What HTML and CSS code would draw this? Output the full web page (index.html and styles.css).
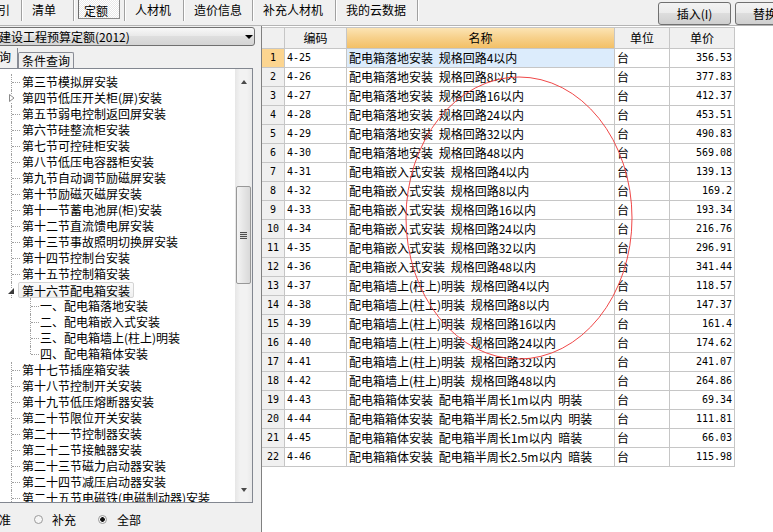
FILE: index.html
```html
<!DOCTYPE html>
<html lang="zh-CN">
<head>
<meta charset="utf-8">
<title>定额</title>
<link rel="stylesheet" href="styles.css">
</head>
<body>
<div class="app">
  <div class="topbar">
    <div class="tabs">
      <div class="tab tab-first">引</div>
      <div class="tab w-qd">清单</div>
      <div class="tab tab-sel"><span class="sel-box">定额</span></div>
      <div class="tab w-rcj">人材机</div>
      <div class="tab w-zj">造价信息</div>
      <div class="tab w-bc">补充人材机</div>
      <div class="tab w-yun">我的云数据</div>
    </div>
    <div class="actions">
      <button class="btn btn-insert">插入(I)</button>
      <button class="btn btn-replace">替换</button>
    </div>
  </div>

  <div class="main">
    <div class="left">
      <div class="combo"><span class="combo-text">建设工程预算定额(2012)</span><span class="combo-arrow"></span></div>
      <div class="ltabs">
        <div class="ltab-sel">询</div>
        <div class="ltab">条件查询</div>
      </div>
      <div class="treebox">
        <div class="tree">
          <div class="node">第三节模拟屏安装</div>
          <div class="node has-exp"><svg class="exp" width="6" height="8" viewBox="0 0 6 8"><path d="M0.5 0.5 L5 4 L0.5 7.5 Z" fill="#fff" stroke="#8a8a8a"/></svg>第四节低压开关柜(屏)安装</div>
          <div class="node">第五节弱电控制返回屏安装</div>
          <div class="node">第六节硅整流柜安装</div>
          <div class="node">第七节可控硅柜安装</div>
          <div class="node">第八节低压电容器柜安装</div>
          <div class="node">第九节自动调节励磁屏安装</div>
          <div class="node">第十节励磁灭磁屏安装</div>
          <div class="node">第十一节蓄电池屏(柜)安装</div>
          <div class="node">第十二节直流馈电屏安装</div>
          <div class="node">第十三节事故照明切换屏安装</div>
          <div class="node">第十四节控制台安装</div>
          <div class="node">第十五节控制箱安装</div>
          <div class="node has-exp"><svg class="exp exp-open" width="6" height="6" viewBox="0 0 6 6"><path d="M6 0 L6 6 L0 6 Z" fill="#3a3a3a"/></svg><span class="sel">第十六节配电箱安装</span></div>
          <div class="node child">一、配电箱落地安装</div>
          <div class="node child">二、配电箱嵌入式安装</div>
          <div class="node child">三、配电箱墙上(柱上)明装</div>
          <div class="node child last">四、配电箱箱体安装</div>
          <div class="node">第十七节插座箱安装</div>
          <div class="node">第十八节控制开关安装</div>
          <div class="node">第十九节低压熔断器安装</div>
          <div class="node">第二十节限位开关安装</div>
          <div class="node">第二十一节控制器安装</div>
          <div class="node">第二十二节接触器安装</div>
          <div class="node">第二十三节磁力启动器安装</div>
          <div class="node">第二十四节减压启动器安装</div>
          <div class="node">第二十五节电磁铁(电磁制动器)安装</div>
        </div>
        <div class="vscroll">
          <div class="sb-btn"><span class="arr-up"></span></div>
          <div class="sb-track">
            <div class="thumb"><span class="grip"></span></div>
          </div>
          <div class="sb-btn"><span class="arr-down"></span></div>
        </div>
      </div>
      <div class="radios">
        <span class="rtext first">准</span>
        <span class="radio r1"></span>
        <span class="rtext">补充</span>
        <span class="radio on r2"></span>
        <span class="rtext">全部</span>
      </div>
    </div>

    <div class="splitter"></div>

    <div class="right">
      <div class="grid">
        <div class="row head">
          <div class="cell"></div>
          <div class="cell">编码</div>
          <div class="cell hot">名称</div>
          <div class="cell">单位</div>
          <div class="cell">单价</div>
        </div>
        <div class="row cur"><div class="cell num">1</div><div class="cell code">4-25</div><div class="cell name">配电箱落地安装 规格回路4以内</div><div class="cell unit">台</div><div class="cell price">356.53</div></div>
        <div class="row"><div class="cell num">2</div><div class="cell code">4-26</div><div class="cell name">配电箱落地安装 规格回路8以内</div><div class="cell unit">台</div><div class="cell price">377.83</div></div>
        <div class="row"><div class="cell num">3</div><div class="cell code">4-27</div><div class="cell name">配电箱落地安装 规格回路16以内</div><div class="cell unit">台</div><div class="cell price">412.37</div></div>
        <div class="row"><div class="cell num">4</div><div class="cell code">4-28</div><div class="cell name">配电箱落地安装 规格回路24以内</div><div class="cell unit">台</div><div class="cell price">453.51</div></div>
        <div class="row"><div class="cell num">5</div><div class="cell code">4-29</div><div class="cell name">配电箱落地安装 规格回路32以内</div><div class="cell unit">台</div><div class="cell price">490.83</div></div>
        <div class="row"><div class="cell num">6</div><div class="cell code">4-30</div><div class="cell name">配电箱落地安装 规格回路48以内</div><div class="cell unit">台</div><div class="cell price">569.08</div></div>
        <div class="row"><div class="cell num">7</div><div class="cell code">4-31</div><div class="cell name">配电箱嵌入式安装 规格回路4以内</div><div class="cell unit">台</div><div class="cell price">139.13</div></div>
        <div class="row"><div class="cell num">8</div><div class="cell code">4-32</div><div class="cell name">配电箱嵌入式安装 规格回路8以内</div><div class="cell unit">台</div><div class="cell price">169.2</div></div>
        <div class="row"><div class="cell num">9</div><div class="cell code">4-33</div><div class="cell name">配电箱嵌入式安装 规格回路16以内</div><div class="cell unit">台</div><div class="cell price">193.34</div></div>
        <div class="row"><div class="cell num">10</div><div class="cell code">4-34</div><div class="cell name">配电箱嵌入式安装 规格回路24以内</div><div class="cell unit">台</div><div class="cell price">216.76</div></div>
        <div class="row"><div class="cell num">11</div><div class="cell code">4-35</div><div class="cell name">配电箱嵌入式安装 规格回路32以内</div><div class="cell unit">台</div><div class="cell price">296.91</div></div>
        <div class="row"><div class="cell num">12</div><div class="cell code">4-36</div><div class="cell name">配电箱嵌入式安装 规格回路48以内</div><div class="cell unit">台</div><div class="cell price">341.44</div></div>
        <div class="row"><div class="cell num">13</div><div class="cell code">4-37</div><div class="cell name">配电箱墙上(柱上)明装 规格回路4以内</div><div class="cell unit">台</div><div class="cell price">118.57</div></div>
        <div class="row"><div class="cell num">14</div><div class="cell code">4-38</div><div class="cell name">配电箱墙上(柱上)明装 规格回路8以内</div><div class="cell unit">台</div><div class="cell price">147.37</div></div>
        <div class="row"><div class="cell num">15</div><div class="cell code">4-39</div><div class="cell name">配电箱墙上(柱上)明装 规格回路16以内</div><div class="cell unit">台</div><div class="cell price">161.4</div></div>
        <div class="row"><div class="cell num">16</div><div class="cell code">4-40</div><div class="cell name">配电箱墙上(柱上)明装 规格回路24以内</div><div class="cell unit">台</div><div class="cell price">174.62</div></div>
        <div class="row"><div class="cell num">17</div><div class="cell code">4-41</div><div class="cell name">配电箱墙上(柱上)明装 规格回路32以内</div><div class="cell unit">台</div><div class="cell price">241.07</div></div>
        <div class="row"><div class="cell num">18</div><div class="cell code">4-42</div><div class="cell name">配电箱墙上(柱上)明装 规格回路48以内</div><div class="cell unit">台</div><div class="cell price">264.86</div></div>
        <div class="row"><div class="cell num">19</div><div class="cell code">4-43</div><div class="cell name">配电箱箱体安装 配电箱半周长1m以内 明装</div><div class="cell unit">台</div><div class="cell price">69.34</div></div>
        <div class="row"><div class="cell num">20</div><div class="cell code">4-44</div><div class="cell name">配电箱箱体安装 配电箱半周长2.5m以内 明装</div><div class="cell unit">台</div><div class="cell price">111.81</div></div>
        <div class="row"><div class="cell num">21</div><div class="cell code">4-45</div><div class="cell name">配电箱箱体安装 配电箱半周长1m以内 暗装</div><div class="cell unit">台</div><div class="cell price">66.03</div></div>
        <div class="row"><div class="cell num">22</div><div class="cell code">4-46</div><div class="cell name">配电箱箱体安装 配电箱半周长2.5m以内 暗装</div><div class="cell unit">台</div><div class="cell price">115.98</div></div>
      </div>
      <svg class="mark" width="512" height="506" viewBox="0 0 512 506">
        <ellipse cx="257" cy="192" rx="113" ry="141" fill="none" stroke="#f04848" stroke-width="1"/>
      </svg>
    </div>
  </div>
</div>
</body>
</html>
```

FILE: styles.css
```css
* { box-sizing: border-box; margin: 0; padding: 0; }
html, body { width: 773px; height: 532px; overflow: hidden; }
body {
  background: #f0f0f0;
  font-family: "Noto Sans CJK SC", "Noto Sans", sans-serif;
  font-size: 12px;
  line-height: 14px;
  color: #000;
}
.app { width: 773px; height: 532px; display: flex; flex-direction: column; overflow: hidden; }

/* ---------- top bar ---------- */
.topbar {
  height: 26px;
  flex: none;
  display: flex;
  border-bottom: 1px solid #b4b4b4;
  overflow: hidden;
}
.tabs { display: flex; height: 21px; }
.tab {
  height: 21px;
  line-height: 20px;
  padding-left: 10px;
  border-right: 1px solid #a0a0a0;
  box-shadow: 1px 0 0 #ffffff;
  white-space: nowrap;
}
.tab-first { width: 22px; padding-left: 0; text-indent: -2px; }
.w-qd { width: 52px; }
.w-rcj { width: 59px; }
.w-zj { width: 69px; }
.w-bc { width: 83px; }
.w-yun { width: 82px; }
.tab-sel { width: 51px; padding-left: 4px; }
.sel-box {
  display: block;
  width: 42px;
  height: 20px;
  margin-top: -1px;
  padding-left: 5px;
  line-height: 21px;
  border: 1px solid #8c8c8c;
  border-left-color: #6e6e6e;
  background: repeating-conic-gradient(#ffffff 0 25%, #e9e9e9 0 50%) 0 0 / 2px 2px;
}
.actions {
  margin-left: auto;
  margin-right: -40px;
  display: flex;
  gap: 4px;
  padding-top: 2px;
}
.btn {
  height: 23px;
  border: 1px solid #707070;
  border-radius: 3px;
  background: linear-gradient(#f3f3f3, #ebebeb 50%, #dddddd 50%, #cfcfcf);
  font-family: inherit;
  font-size: 12px;
  color: #000;
  line-height: 20px;
  white-space: nowrap;
}
.btn-insert { width: 73px; }
.btn-replace { width: 78px; text-align: left; padding-left: 17px; }

/* ---------- main ---------- */
.main { flex: 1; display: flex; min-height: 0; }
.left { width: 255px; flex: none; display: flex; flex-direction: column; }
.splitter { width: 6px; flex: none; }
.right {
  flex: 1;
  position: relative;
  background: #ffffff;
  border-left: 1px solid #808080;
  padding-top: 1px;
  overflow: hidden;
}

/* combo */
.combo {
  margin-top: 1px;
  margin-left: -3px;
  width: 258px;
  height: 19px;
  border: 1px solid #707070;
  border-radius: 3px;
  background: linear-gradient(#f8f8f8, #e8e8e8 50%, #dedede 50%, #d4d4d4);
  display: flex;
  align-items: center;
  padding-left: 1px;
  white-space: nowrap;
}
.combo-arrow {
  margin-left: auto;
  margin-right: 1px;
  width: 0;
  height: 0;
  border-left: 4px solid transparent;
  border-right: 4px solid transparent;
  border-top: 4px solid #000;
}

/* left tabs */
.ltabs { display: flex; align-items: flex-end; height: 20px; margin-top: 2px; }
.ltab-sel {
  width: 18px;
  height: 20px;
  line-height: 18px;
  text-indent: -1px;
  border-right: 1px solid #898c95;
  overflow: hidden;
}
.ltab {
  height: 16px;
  line-height: 15px;
  padding: 0 3px;
  border: 1px solid #898c95;
  border-bottom: none;
  border-radius: 2px 2px 0 0;
  white-space: nowrap;
}

/* tree */
.treebox {
  width: 253px;
  height: 435px;
  flex: none;
  display: flex;
  background: #ffffff;
  border: 1px solid #828790;
  border-left: none;
  overflow: hidden;
}
.tree { flex: 1; overflow: hidden; padding-top: 5px; }
.node {
  position: relative;
  height: 16px;
  line-height: 16px;
  padding-left: 22px;
  white-space: nowrap;
}
.node::before {
  content: "";
  position: absolute;
  left: 11px;
  top: 0;
  bottom: 0;
  border-left: 1px dotted #a0a0a0;
}
.node::after {
  content: "";
  position: absolute;
  left: 12px;
  top: 8px;
  width: 8px;
  border-top: 1px dotted #a0a0a0;
}
.node.has-exp::after { display: none; }
.exp { position: absolute; left: 9px; top: 4px; background: #fff; }
.exp-open { left: 8px; top: 6px; }
.node.child { padding-left: 40px; }
.node.child::before { left: 30px; }
.node.child.last::before { bottom: 8px; }
.node.child::after { left: 31px; width: 8px; }
.sel {
  display: inline-block;
  height: 16px;
  line-height: 15px;
  margin-left: -4px;
  padding: 0 3px;
  border: 1px solid #d4d4d4;
  border-radius: 2px;
  background: linear-gradient(#fbfbfb, #efefef);
}

/* scrollbar */
.vscroll {
  width: 17px;
  flex: none;
  display: flex;
  flex-direction: column;
  padding: 4px 0;
  background: linear-gradient(90deg, #e6e6e6, #f2f2f2 30%, #f2f2f2 70%, #e9e9e9);
}
.sb-btn { height: 17px; flex: none; display: flex; align-items: center; justify-content: center; }
.arr-up, .arr-down {
  width: 0;
  height: 0;
  border-left: 3.5px solid transparent;
  border-right: 3.5px solid transparent;
}
.arr-up { border-bottom: 4px solid #4a4a4a; }
.arr-down { border-top: 4px solid #4a4a4a; }
.sb-track { flex: 1; padding: 96px 1px 0 1px; }
.thumb {
  height: 98px;
  border: 1px solid #989898;
  border-radius: 2px;
  background: linear-gradient(90deg, #f4f4f4, #e6e6e6 50%, #d9d9d9);
  display: flex;
  align-items: center;
  justify-content: center;
}
.grip {
  width: 7px;
  height: 7px;
  background: repeating-linear-gradient(#4e4e4e 0 1px, #d8d8d8 1px 2px);
}

/* radios */
.radios {
  flex: 1;
  display: flex;
  align-items: center;
  padding-top: 4px;
  white-space: nowrap;
}
.rtext.first { margin-left: -1px; }
.radio {
  width: 9px;
  height: 9px;
  border-radius: 50%;
  border: 1px solid #9a9a9a;
  background: #f6f6f6;
  flex: none;
}
.radio.on { background: radial-gradient(circle, #111 0 2px, #f6f6f6 2.6px); }
.r1 { margin: 0 9px 0 23px; }
.r2 { margin: 0 10px 0 22px; }

/* ---------- grid ---------- */
.grid { width: 473px; border-top: 1px solid #c6c6c6; }
.row {
  display: grid;
  grid-template-columns: 23px 62px 268px 55px 65px;
  height: 19px;
}
.cell {
  border-right: 1px solid #c6c6c6;
  border-bottom: 1px solid #c6c6c6;
  padding: 0 2px;
  line-height: 18px;
  white-space: nowrap;
  overflow: hidden;
}
.head { height: 21px; }
.head .cell { background: #f0f0f0; text-align: center; line-height: 20px; }
.head .cell.hot { background: linear-gradient(#fce4b4, #f7d08a 50%, #f3c066); }
.num {
  background: #f0f0f0;
  text-align: center;
  padding: 0;
  font-family: "DejaVu Sans Mono", "Liberation Mono", monospace;
  font-size: 10px;
}
.code, .price { font-family: "DejaVu Sans Mono", "Liberation Mono", monospace; font-size: 10px; }
.price { text-align: right; }
.name { word-spacing: 3px; }
.cur .num { background: #fcd590; }
.cur .name { background: #dcecfc; }

.mark { position: absolute; left: 0; top: 0; pointer-events: none; }
```
